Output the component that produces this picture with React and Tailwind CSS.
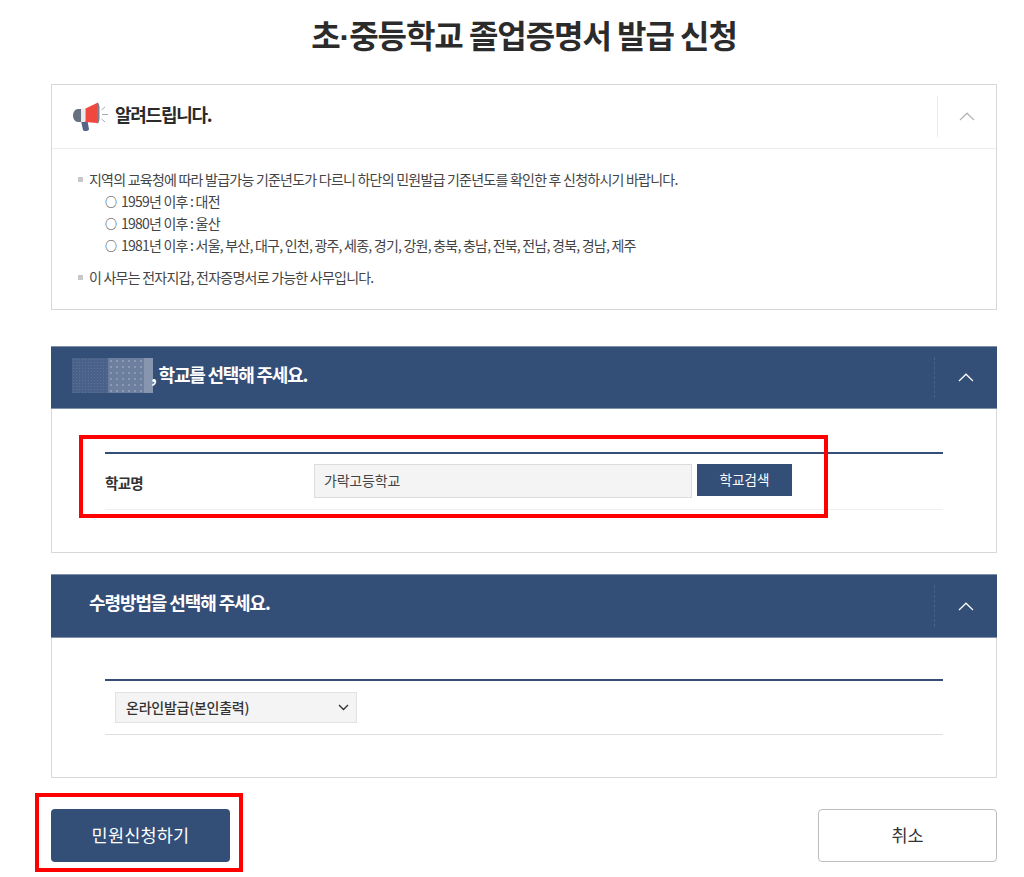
const FONT = "font-['Noto_Sans_CJK_KR','Noto_Sans',sans-serif]";

function Chevron({ color }) {
  return (
    <svg width="16" height="9" viewBox="0 0 16 9" fill="none" className="block">
      <path d="M1 8L8 1.2L15 8" stroke={color} strokeWidth="1.2" />
    </svg>
  );
}

function Megaphone() {
  return (
    <svg width="35" height="31" viewBox="0 0 35 31" fill="none" className="block">
      <path d="M8 20l2 9c.4 1.600 6 1.300 6-.8L14.500 20z" fill="#55658a" />
      <path d="M5 8h4v13H5C2 21 0 18 0 14.500S2 8 5 8z" fill="#66707f" />
      <path d="M8 7.500h4.500v13.500H8z" fill="#eceaea" />
      <path d="M12.500 7.500L24 2v20l-11.500-1z" fill="#f0483e" />
      <path d="M24 1.500c1.500 0 2.500 2 2.500 5v11c0 3-1 5-2.500 5z" fill="#76808f" />
      <path d="M29 13.500h6M28.500 9l3.500-3M28.500 18l3.500 3" stroke="#a4acb6" strokeWidth="1" />
    </svg>
  );
}

function BlueHeader({ children, h }) {
  return (
    <div className={`flex items-stretch bg-[#334e77] border-y border-[#7f90ab] ${h}`}>
      <div className="flex-1 flex items-center min-w-0">{children}</div>
      <div className="w-[63px] flex my-[10px] border-l border-dashed border-[#4a628a] items-center justify-center">
        <Chevron color="#ffffff" />
      </div>
    </div>
  );
}

function Sub({ children }) {
  return (
    <div className="h-[22px]">
      <span className="inline-block w-[16px] text-[12px] leading-[12px] font-bold">○</span>
      {children}
    </div>
  );
}

export default function App() {
  return (
    <div className={`${FONT} relative w-[1024px] h-[877px] overflow-hidden bg-white pl-[51px] pr-[27px] text-[#333]`}>
      <h1 className="h-[84px] pt-[10px] text-center text-[32px] leading-[48px] font-bold tracking-[-1.05px] text-[#2b2b2b]">
        초<span className="font-['Liberation_Sans',sans-serif]">·</span>중등학교 졸업증명서 발급 신청
      </h1>

      <section className="h-[226px] border border-[#d8d8d8]">
        <div className="h-[64px] flex items-stretch border-b border-[#ececec]">
          <div className="flex-1 flex items-center pl-[21px] gap-[7px]">
            <Megaphone />
            <span className="text-[18px] font-bold -mt-[5px] tracking-[-1.25px] text-[#2b2b2b]">알려드립니다.</span>
          </div>
          <div className="w-[59px] flex my-[11px] border-l border-[#ececec] items-center justify-center">
            <Chevron color="#b5b5b5" />
          </div>
        </div>
        <div className="pl-[26px] pt-[19px] text-[14px] leading-[22px] tracking-[-0.77px] text-[#444]">
          <div className="flex items-center gap-[6px]">
            <span className="w-[5px] h-[5px] bg-[#c8c8c8]" />
            <span>지역의 교육청에 따라 발급가능 기준년도가 다르니 하단의 민원발급 기준년도를 확인한 후 신청하시기 바랍니다.</span>
          </div>
          <div className="pl-[27px] flex flex-col">
            <Sub>1959년 이후 : 대전</Sub>
            <Sub>1980년 이후 : 울산</Sub>
            <Sub>1981년 이후 : 서울, 부산, 대구, 인천, 광주, 세종, 경기, 강원, 충북, 충남, 전북, 전남, 경북, 경남, 제주</Sub>
          </div>
          <div className="flex items-center gap-[6px] mt-[10px]">
            <span className="w-[5px] h-[5px] bg-[#c8c8c8]" />
            <span>이 사무는 전자지갑, 전자증명서로 가능한 사무입니다.</span>
          </div>
        </div>
      </section>

      <section className="mt-[36px] h-[207px] border-x border-b border-[#d8d8d8]">
        <div className="-mx-px">
          <BlueHeader h="h-[63px]">
            <div className="ml-[21px] flex h-[35px] w-[81px] mb-[5px]">
              <div className="w-[36px] bg-[#4a6189] bg-[radial-gradient(#5d7297_1px,transparent_1px)] bg-[length:3px_3px]" />
              <div className="w-[36px] bg-[#6c7f9e] bg-[radial-gradient(#8b9ab3_1px,transparent_1px)] bg-[length:6px_6px]" />
              <div className="w-[9px] bg-[#8796ae]" />
            </div>
            <span className="text-[18px] font-bold -mt-[6px] -ml-[2px] tracking-[-1.2px] text-white">, 학교를 선택해 주세요.</span>
          </BlueHeader>
        </div>
        <div className="mx-[53px] mt-[43px] border-t-2 border-[#334e77] h-[58px] border-b border-b-[#efefef] flex items-center">
          <span className="w-[209px] pt-[3px] text-[14.500px] font-bold tracking-[-0.7px] text-[#333]">학교명</span>
          <div className="w-[378px] h-[34px] -mt-[2px] bg-[#f4f4f4] border border-[#dcdcdc] flex items-center pl-[9px] text-[14px] tracking-[-0.2px] text-[#444]">
            가락고등학교
          </div>
          <button className="ml-[5px] w-[95px] h-[32px] -mt-[4px] bg-[#334e77] text-white text-[13.500px] tracking-[0.1px]">학교검색</button>
        </div>
      </section>

      <section className="mt-[21px] h-[204px] border-x border-b border-[#d8d8d8]">
        <div className="-mx-px">
          <BlueHeader h="h-[64px]">
            <span className="pl-[38px] -mt-[7px] text-[18px] font-bold tracking-[-1.1px] text-white">수령방법을 선택해 주세요.</span>
          </BlueHeader>
        </div>
        <div className="mx-[53px] mt-[41px] border-t-2 border-[#334e77] h-[56px] border-b border-b-[#dfdfdf] flex items-center pl-[10px]">
          <div className="w-[242px] h-[31px] bg-[#f4f4f4] border border-[#e2e2e2] flex items-center justify-between pl-[10px] pr-[7px] text-[14px] font-medium tracking-[-0.25px] text-[#333]">
            <span>온라인발급(본인출력)</span>
            <svg width="11" height="7" viewBox="0 0 11 7" fill="none">
              <path d="M1 1l4.500 4.500L10 1" stroke="#333" strokeWidth="1.400" />
            </svg>
          </div>
        </div>
      </section>

      <div className="mt-[31px] flex justify-between">
        <button className="w-[179px] h-[53px] rounded-[4px] bg-[#334e77] text-white text-[17.500px] tracking-[0.2px]">민원신청하기</button>
        <button className="w-[179px] h-[53px] rounded-[4px] bg-white border border-[#bdbdbd] text-[#333] text-[17.500px]">취소</button>
      </div>

      <div className="absolute left-[79px] top-[435px] w-[749px] h-[83px] border-[4px] border-[#ff0000]" />
      <div className="absolute left-[35px] top-[793px] w-[208px] h-[79px] border-[4px] border-[#ff0000]" />
    </div>
  );
}
